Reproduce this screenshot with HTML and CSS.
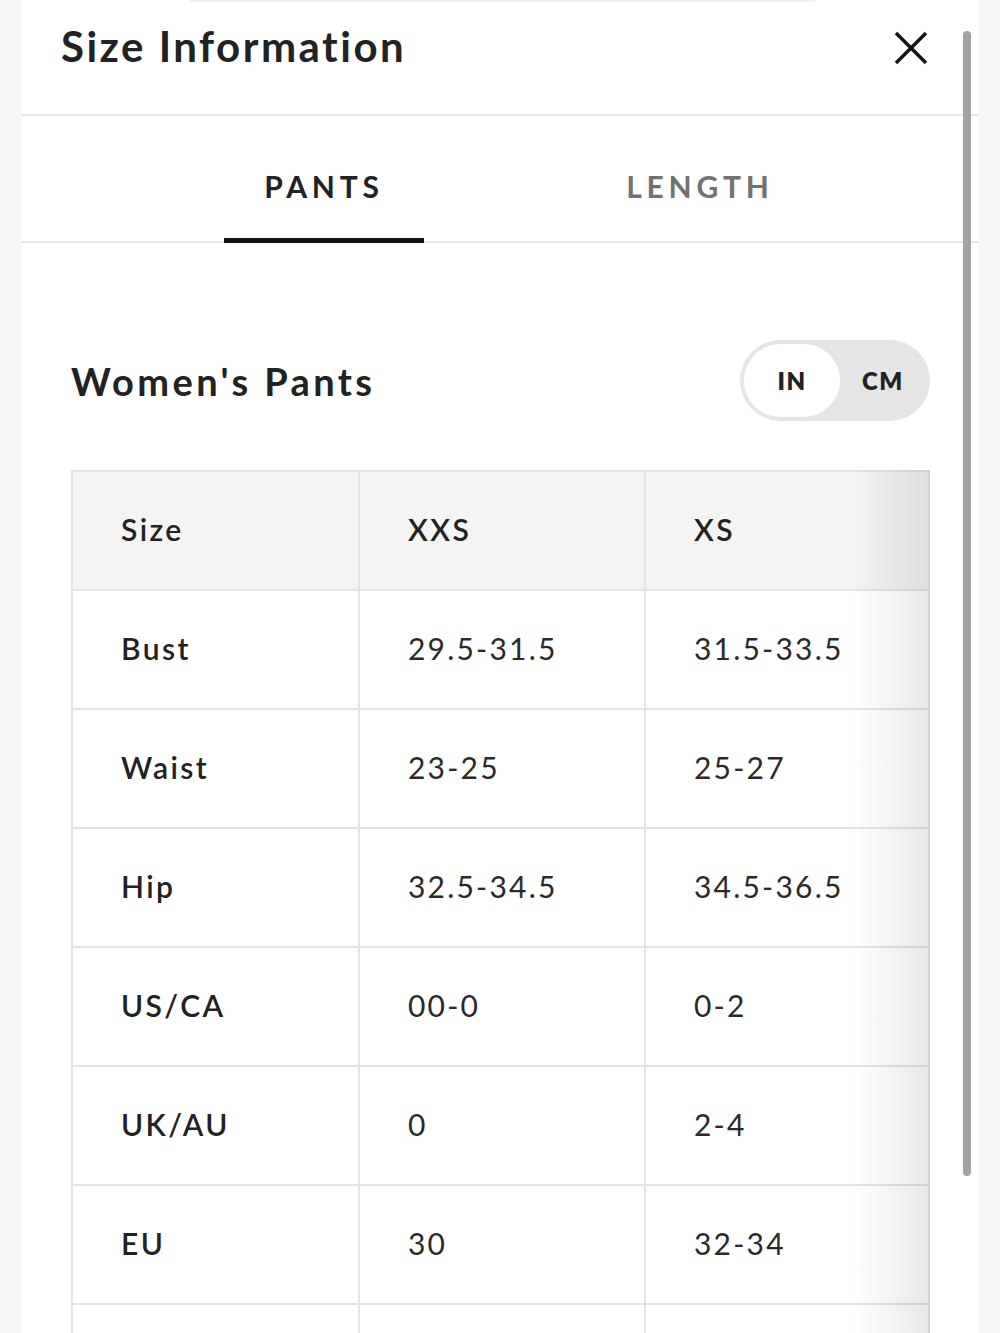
FILE: index.html
```html
<!DOCTYPE html>
<html lang="en">
<head>
<meta charset="utf-8">
<title>Size Information</title>
<link rel="stylesheet" href="styles.css">
</head>
<body>
<div class="panel">
  <header class="header">
    <h1 class="title">Size Information</h1>
    <button class="close" aria-label="Close">
      <svg width="34" height="34" viewBox="0 0 34 34"><path d="M2 2 L32 32 M32 2 L2 32" stroke="#111" stroke-width="3.4" fill="none"/></svg>
    </button>
  </header>
  <nav class="tabs">
    <div class="tab active">PANTS</div>
    <div class="tab">LENGTH</div>
  </nav>
  <section class="content">
    <div class="section-head">
      <h2 class="section-title">Women's Pants</h2>
      <div class="toggle">
        <span class="opt on">IN</span>
        <span class="opt">CM</span>
      </div>
    </div>
    <div class="table-wrap">
      <table class="chart">
        <thead>
          <tr><th>Size</th><th>XXS</th><th>XS</th></tr>
        </thead>
        <tbody>
          <tr><th>Bust</th><td>29.5-31.5</td><td>31.5-33.5</td></tr>
          <tr><th>Waist</th><td>23-25</td><td>25-27</td></tr>
          <tr><th>Hip</th><td>32.5-34.5</td><td>34.5-36.5</td></tr>
          <tr><th>US/CA</th><td>00-0</td><td>0-2</td></tr>
          <tr><th>UK/AU</th><td>0</td><td>2-4</td></tr>
          <tr><th>EU</th><td>30</td><td>32-34</td></tr>
          <tr class="partial"><th></th><td></td><td></td></tr>
        </tbody>
      </table>
    </div>
  </section>
  <div class="scrollbar"></div>
</div>
</body>
</html>
```
FILE: styles.css
```css
html, body {
  margin: 0;
  padding: 0;
}
body {
  background: #f6f6f6;
  font-family: "Lato", "Open Sans", sans-serif;
  color: #222;
  height: 1333px;
  overflow: hidden;
}
.panel {
  position: relative;
  margin-left: 22px;
  width: 956px;
  height: 1333px;
  background: #fff;
  overflow: hidden;
}
.panel::before {
  content: "";
  position: absolute;
  top: 0;
  left: 168px;
  width: 625px;
  height: 2px;
  background: #f0f0f0;
}
.header {
  height: 114px;
  border-bottom: 2px solid #e6e6e6;
  display: flex;
  justify-content: space-between;
  align-items: flex-start;
  padding: 0 50px 0 39px;
}
.title {
  margin: 22px 0 0;
  font-size: 42px;
  font-weight: 700;
  letter-spacing: 2.5px;
  line-height: 48px;
  color: #222;
}
.close {
  margin-top: 31px;
  padding: 0;
  border: 0;
  background: none;
  width: 34px;
  height: 34px;
}
.close svg { display: block; }
.tabs {
  display: flex;
  height: 125px;
  border-bottom: 2px solid #e6e6e6;
  padding-left: 202px;
  gap: 176px;
}
.tab {
  width: 200px;
  display: flex;
  align-items: center;
  justify-content: center;
  font-size: 30px;
  font-weight: 700;
  letter-spacing: 4.8px;
  color: #727272;
  box-sizing: border-box;
  padding-top: 14px;
}
.tab.active {
  color: #222;
  border-bottom: 5px solid #111;
  margin-bottom: -2px;
  padding-top: 18px;
}
.content {
  padding: 97px 48px 0 49px;
}
.section-head {
  display: flex;
  justify-content: space-between;
  align-items: center;
  height: 81px;
}
.section-title {
  margin: 0;
  font-size: 38px;
  font-weight: 700;
  letter-spacing: 3.4px;
  color: #222;
}
.toggle {
  display: flex;
  align-items: center;
  width: 190px;
  height: 81px;
  box-sizing: border-box;
  padding: 4px;
  border-radius: 41px;
  background: #e5e5e5;
}
.opt {
  flex: 1;
  height: 100%;
  display: flex;
  align-items: center;
  justify-content: center;
  font-size: 24px;
  font-weight: 800;
  letter-spacing: 1.5px;
  color: #222;
}
.opt.on {
  flex: 0 0 96px;
  background: #fff;
  border-radius: 37px;
}
.table-wrap {
  position: relative;
  margin-top: 49px;
  overflow: hidden;
}
.table-wrap::after {
  content: "";
  position: absolute;
  top: 0;
  right: 0;
  width: 80px;
  height: 100%;
  background: linear-gradient(to right, rgba(0,0,0,0), rgba(0,0,0,0.09));
  pointer-events: none;
}
.chart {
  width: 859px;
  border-collapse: collapse;
  table-layout: fixed;
}
.chart th, .chart td {
  height: 119px;
  box-sizing: border-box;
  border: 2px solid #e4e4e4;
  padding: 0 0 3px 48px;
  text-align: left;
  vertical-align: middle;
  font-size: 30px;
}
.chart th {
  font-weight: 600;
  letter-spacing: 2.4px;
  color: #222;
}
.chart td {
  font-weight: 400;
  letter-spacing: 2.2px;
  color: #2a2a2a;
}
.chart thead th {
  background: #f4f4f4;
}
.chart th:first-child { width: 287px; }
.chart tr > :nth-child(2) { width: 286px; }
.scrollbar {
  position: absolute;
  top: 31px;
  left: 941px;
  width: 8px;
  height: 1145px;
  border-radius: 4px;
  background: #a4a4a4;
}
```
